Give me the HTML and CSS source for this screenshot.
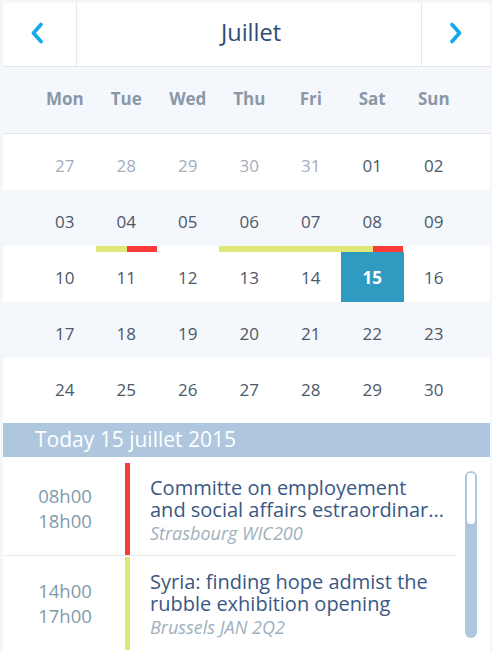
FILE: index.html
```html
<!DOCTYPE html>
<html lang="fr">
<head>
<meta charset="utf-8">
<title>Calendrier</title>
<link rel="stylesheet" href="styles.css">
</head>
<body>
<div class="app">
  <header class="month-bar">
    <button class="nav nav-prev" aria-label="Previous">
      <svg width="16" height="22" viewBox="0 0 16 22"><path d="M11 2.5 L3.5 11 L11 19.5" fill="none" stroke="#14a6ee" stroke-width="3.6" stroke-linecap="round" stroke-linejoin="round"/></svg>
    </button>
    <div class="month-title">Juillet</div>
    <button class="nav nav-next" aria-label="Next">
      <svg width="16" height="22" viewBox="0 0 16 22"><path d="M5 2.5 L12.5 11 L5 19.5" fill="none" stroke="#14a6ee" stroke-width="3.6" stroke-linecap="round" stroke-linejoin="round"/></svg>
    </button>
  </header>

  <div class="weekdays">
    <span>Mon</span><span>Tue</span><span>Wed</span><span>Thu</span><span>Fri</span><span>Sat</span><span>Sun</span>
  </div>

  <div class="weeks">
    <div class="week">
      <div class="day other">27</div><div class="day other">28</div><div class="day other">29</div><div class="day other">30</div><div class="day other">31</div><div class="day">01</div><div class="day">02</div>
    </div>
    <div class="week alt">
      <div class="day">03</div><div class="day">04</div><div class="day">05</div><div class="day">06</div><div class="day">07</div><div class="day">08</div><div class="day">09</div>
    </div>
    <div class="week">
      <div class="day">10</div><div class="day ev ev-split">11</div><div class="day">12</div><div class="day ev ev-yellow">13</div><div class="day ev ev-yellow">14</div><div class="day ev ev-split today"><span class="today-box">15</span></div><div class="day">16</div>
    </div>
    <div class="week alt">
      <div class="day">17</div><div class="day">18</div><div class="day">19</div><div class="day">20</div><div class="day">21</div><div class="day">22</div><div class="day">23</div>
    </div>
    <div class="week">
      <div class="day">24</div><div class="day">25</div><div class="day">26</div><div class="day">27</div><div class="day">28</div><div class="day">29</div><div class="day">30</div>
    </div>
  </div>

  <div class="today-bar">Today 15 juillet 2015</div>

  <div class="events-area">
    <ul class="events">
      <li class="event">
        <div class="times"><span>08h00</span><span>18h00</span></div>
        <div class="marker red"></div>
        <div class="details">
          <div class="title">Committe on employement<br>and social affairs estraordinar...</div>
          <div class="place">Strasbourg WIC200</div>
        </div>
      </li>
      <li class="event second">
        <div class="times"><span>14h00</span><span>17h00</span></div>
        <div class="marker yellow"></div>
        <div class="details">
          <div class="title">Syria: finding hope admist the<br>rubble exhibition opening</div>
          <div class="place">Brussels JAN 2Q2</div>
        </div>
      </li>
    </ul>
    <div class="scroll-track"><div class="scroll-thumb"></div></div>
  </div>
</div>
</body>
</html>
```

FILE: styles.css
```css
* { box-sizing: border-box; }
html, body { margin: 0; padding: 0; }
body {
  background: #f5f6f8;
  width: 492px;
  height: 652px;
  overflow: hidden;
}
.app {
  margin: 3px 2px 0 3px;
  background: #ffffff;
  height: 649px;
  overflow: hidden;
  display: flex;
  flex-direction: column;
}

/* Month header */
.month-bar {
  display: flex;
  height: 64px;
  border-bottom: 1px solid #e3e6ea;
}
.nav {
  width: 74px;
  border: 0;
  background: #fff;
  padding: 0;
  display: flex;
  align-items: center;
  justify-content: center;
  cursor: pointer;
}
.nav-prev { border-right: 1px solid #e6e8ec; }
.nav-next { width: 69px; border-left: 1px solid #e6e8ec; }
.nav svg { display: block; margin-top: -4px; }
.nav-prev svg { margin-left: -4px; }
.nav-next svg { margin-left: -2px; }
.month-title {
  flex: 1;
  display: flex;
  align-items: center;
  justify-content: center;
  font-family: "Open Sans", sans-serif;
  font-size: 23.5px;
  color: #2e4b76;
  padding-bottom: 5px;
  padding-left: 4px;
}

/* Weekdays */
.weekdays {
  display: grid;
  grid-template-columns: repeat(7, 61.5px);
  padding-left: 31px;
  height: 67px;
  align-items: center;
  background: #f4f7fb;
  border-bottom: 1px solid #e3e6ea;
  font-family: "Open Sans", sans-serif;
  font-weight: 700;
  font-size: 17px;
  color: #8a97a8;
  padding-bottom: 3px;
}
.weekdays span { text-align: center; }

/* Weeks */
.weeks {
  padding-bottom: 9px;
}
.week {
  display: grid;
  grid-template-columns: repeat(7, 61.5px);
  padding-left: 31px;
  height: 56px;
}
.week.alt { background: #f4f7fb; }
.day {
  display: flex;
  align-items: center;
  justify-content: center;
  font-family: "Open Sans", sans-serif;
  font-size: 17px;
  color: #4d5868;
  padding-top: 6px;
}
.day.other { color: #a3adba; }
.day.ev {
  background-repeat: no-repeat;
  background-size: 100% 6px;
  background-position: top left;
}
.ev-yellow { background-image: linear-gradient(#dfe67a, #dfe67a); }
.ev-split { background-image: linear-gradient(90deg, #dfe67a 0 50%, #fb3a3a 50% 100%); }
.day.today { align-items: stretch; justify-content: stretch; }
.today-box {
  flex: 1;
  display: flex;
  align-items: center;
  justify-content: center;
  background: #2f9bc0;
  color: #fff;
  font-weight: 700;
  margin-left: -1px;
  margin-right: -1px;
}

/* Today bar */
.today-bar {
  height: 34px;
  background: #aec7df;
  color: #ffffff;
  font-family: "Open Sans", sans-serif;
  font-size: 21px;
  line-height: 33px;
  padding-left: 32px;
}

/* Events */
.events-area {
  flex: 1;
  display: flex;
  padding-top: 6px;
}
.events {
  list-style: none;
  margin: 0;
  padding: 0 0 0 2px;
  width: 454px;
}
.event {
  display: flex;
  height: 93px;
  border-bottom: 1px solid #e2e5e9;
}
.event.second {
  border-bottom: 0;
  margin-top: 1px;
}
.times {
  width: 120px;
  display: flex;
  flex-direction: column;
  justify-content: center;
  align-items: center;
  font-family: "Open Sans", sans-serif;
  font-size: 18.5px;
  line-height: 25px;
  color: #7f9bab;
  padding-bottom: 2px;
}
.marker { width: 5px; }
.marker.red { background: #fb3a3a; }
.marker.yellow { background: #dfe67a; }
.details {
  flex: 1;
  padding: 14px 0 0 20px;
  font-family: "Open Sans", sans-serif;
}
.title {
  font-size: 20px;
  line-height: 22px;
  color: #3a5883;
}
.place {
  font-style: italic;
  font-size: 18px;
  line-height: 24px;
  color: #9fb0bd;
}

.scroll-track {
  margin: 8px 0 0 8px;
  width: 12px;
  height: 167px;
  border-radius: 6px;
  background: #aec7df;
  padding: 2px;
}
.scroll-thumb {
  height: 51px;
  border-radius: 4px 4px 5px 5px;
  background: #ffffff;
}
```
